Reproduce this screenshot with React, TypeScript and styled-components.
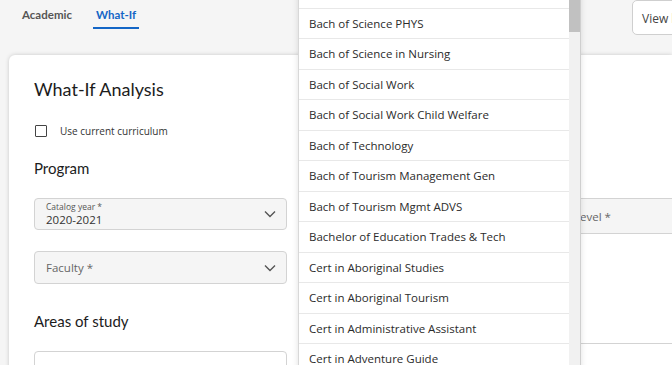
import React from 'react';
import styled, { createGlobalStyle } from 'styled-components';

const GlobalStyle = createGlobalStyle`
  html, body {
    margin: 0;
    padding: 0;
    background: #f5f5f5;
    font-family: "Open Sans", "Liberation Sans", sans-serif;
    color: #222;
    overflow: hidden;
  }
`;

const Page = styled.div`
  position: relative;
  width: 672px;
  height: 365px;
  overflow: hidden;
  background: #f5f5f5;
`;

const TopBar = styled.div`
  height: 55px;
  display: flex;
  align-items: flex-start;
  padding-left: 22px;
`;

const Tabs = styled.div`
  display: flex;
  gap: 18px;
  padding-top: 8px;
`;

const Tab = styled.div<{ $active?: boolean }>`
  font-family: Lato, "Open Sans", sans-serif;
  font-size: 11.5px;
  font-weight: 700;
  color: ${p => (p.$active ? '#1466c6' : '#555')};
  padding: 0 3px 6px;
  margin-left: ${p => (p.$active ? '0' : '-3px')};
  border-bottom: 2px solid ${p => (p.$active ? '#1466c6' : 'transparent')};
`;

const ViewButton = styled.div`
  margin-left: auto;
  margin-right: -40px;
  height: 35px;
  width: 80px;
  box-sizing: border-box;
  border: 1px solid #cfcfcf;
  border-radius: 5px;
  background: #fff;
  font-size: 12px;
  color: #444;
  padding: 9px 0 0 9px;
  white-space: nowrap;
`;

const Card = styled.div`
  margin-left: 9px;
  background: #fff;
  border-radius: 6px 0 0 0;
  box-shadow: 0 0 4px rgba(0, 0, 0, 0.18);
  height: 330px;
  padding: 22px 0 0 25px;
  box-sizing: border-box;
  display: flex;
  gap: 24px;
`;

const LeftCol = styled.div`
  width: 253px;
  flex-shrink: 0;
  display: flex;
  flex-direction: column;
`;

const Title = styled.h1`
  margin: 0;
  font-family: Lato, "Open Sans", sans-serif;
  font-weight: 400;
  font-size: 18px;
  color: #1c1c1c;
  line-height: 24px;
`;

const CheckRow = styled.label`
  display: flex;
  align-items: center;
  gap: 13px;
  margin-top: 23px;
  margin-left: 1px;
  font-size: 10px;
  color: #333;
`;

const Box = styled.span`
  width: 10px;
  height: 10px;
  border: 1.5px solid #444;
  border-radius: 1px;
`;

const Section = styled.h2<{ $top: number }>`
  margin: ${p => p.$top}px 0 0;
  font-family: Lato, "Open Sans", sans-serif;
  font-weight: 400;
  font-size: 15px;
  color: #1c1c1c;
  line-height: 20px;
`;

const Select = styled.div<{ $top: number }>`
  margin-top: ${p => p.$top}px;
  height: 36px;
  box-sizing: border-box;
  background: #f5f5f5;
  border: 1px solid #d3d3d3;
  border-radius: 4px;
  display: flex;
  align-items: center;
  padding: 0 10px 0 11px;
`;

const SelectText = styled.div`
  flex: 1;
  display: flex;
  flex-direction: column;
`;

const SmallLabel = styled.span`
  font-size: 8.5px;
  color: #555;
  line-height: 11px;
`;

const Value = styled.span<{ $placeholder?: boolean }>`
  font-size: 11.5px;
  color: ${p => (p.$placeholder ? '#666' : '#333')};
  line-height: 15px;
`;

const EmptyInput = styled.div`
  margin-top: 20px;
  height: 36px;
  border: 1px solid #d3d3d3;
  border-radius: 4px;
`;

const RightCol = styled.div`
  flex: 1;
  display: grid;
  grid-template-columns: 238px 253px;
  column-gap: 13px;
  align-content: start;
  padding-top: 121px;
`;

const RightField = styled.div`
  height: 36px;
  box-sizing: border-box;
  background: #f5f5f5;
  border: 1px solid #d3d3d3;
  border-radius: 4px;
  display: flex;
  align-items: center;
  padding-left: 11px;
  font-size: 11.5px;
  color: #666;
`;

const RightEmpty = styled.div`
  grid-column: 2;
  margin-top: 109px;
  height: 36px;
  border: 1px solid #d3d3d3;
  border-radius: 4px;
`;

const Dropdown = styled.div`
  position: absolute;
  left: 298px;
  top: -22px;
  width: 281px;
  height: 400px;
  background: #fff;
  border-left: 1px solid #d8d8d8;
  border-right: 1px solid #cfcfcf;
  display: flex;
  box-shadow: 0 2px 6px rgba(0, 0, 0, 0.12);
`;

const List = styled.ul`
  list-style: none;
  margin: 0;
  padding: 0;
  flex: 1;
`;

const Item = styled.li`
  height: 30.5px;
  box-sizing: border-box;
  border-bottom: 1.5px solid #e8e8e8;
  display: flex;
  align-items: center;
  padding-left: 10px;
  font-size: 11.5px;
  color: #2b2b2b;
`;

const Scrollbar = styled.div`
  width: 11px;
  background: #f1f1f1;
  display: flex;
  flex-direction: column;
`;

const Thumb = styled.div`
  margin-top: 22px;
  height: 32px;
  background: #c1c1c1;
`;

const Chevron = () => (
  <svg width="12" height="8" viewBox="0 0 12 8" fill="none">
    <path d="M1 1.5l5 5 5-5" stroke="#555" strokeWidth="1.4" />
  </svg>
);

const programs = [
  'Bach of Science MATH',
  'Bach of Science PHYS',
  'Bach of Science in Nursing',
  'Bach of Social Work',
  'Bach of Social Work Child Welfare',
  'Bach of Technology',
  'Bach of Tourism Management Gen',
  'Bach of Tourism Mgmt ADVS',
  'Bachelor of Education Trades & Tech',
  'Cert in Aboriginal Studies',
  'Cert in Aboriginal Tourism',
  'Cert in Administrative Assistant',
  'Cert in Adventure Guide',
];

export default function App() {
  return (
    <>
      <GlobalStyle />
      <Page>
        <TopBar>
          <Tabs>
            <Tab>Academic</Tab>
            <Tab $active>What-If</Tab>
          </Tabs>
          <ViewButton>View history</ViewButton>
        </TopBar>
        <Card>
          <LeftCol>
            <Title>What-If Analysis</Title>
            <CheckRow>
              <Box />
              Use current curriculum
            </CheckRow>
            <Section $top={20}>Program</Section>
            <Select $top={20}>
              <SelectText>
                <SmallLabel>Catalog year *</SmallLabel>
                <Value>2020-2021</Value>
              </SelectText>
              <Chevron />
            </Select>
            <Select $top={21}>
              <SelectText>
                <Value $placeholder>Faculty *</Value>
              </SelectText>
              <Chevron />
            </Select>
            <Section $top={27}>Areas of study</Section>
            <EmptyInput />
          </LeftCol>
          <RightCol>
            <RightField />
            <RightField>Level *</RightField>
            <RightEmpty />
          </RightCol>
        </Card>
        <Dropdown>
          <List>
            {programs.map(p => (
              <Item key={p}>{p}</Item>
            ))}
          </List>
          <Scrollbar>
            <Thumb />
          </Scrollbar>
        </Dropdown>
      </Page>
    </>
  );
}
